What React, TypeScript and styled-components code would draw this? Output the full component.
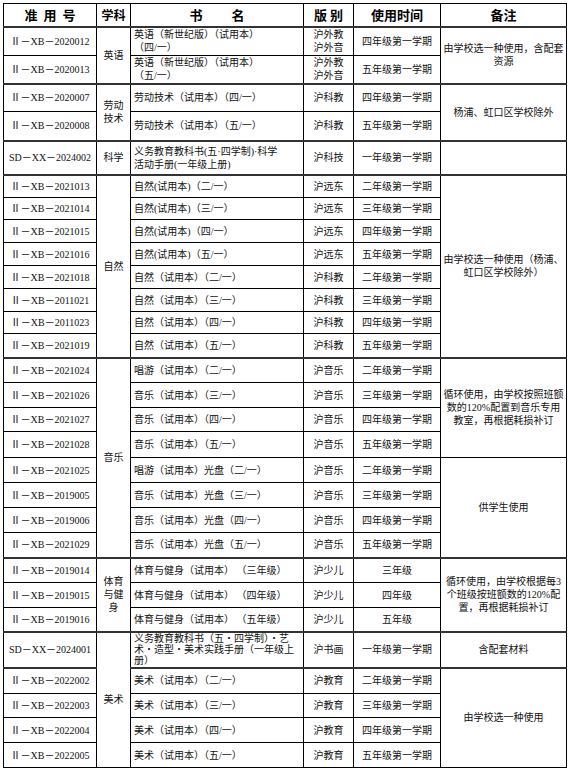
import React from 'react';
import styled, { createGlobalStyle } from 'styled-components';

const GlobalStyle = createGlobalStyle`
  html, body { margin: 0; padding: 0; background: #ffffff; }
  body { font-family: "Liberation Serif", "Noto Sans CJK SC", serif; color: #000; }
`;

const Page = styled.div`
  padding: 3px;
  width: 563px;
`;

const Table = styled.table`
  width: 563px;
  border-collapse: collapse;
  table-layout: fixed;
  font-family: "Liberation Serif", "Noto Sans CJK SC", serif;
  font-size: 10px;
  line-height: 13px;
  color: #111;
`;

const HeadRow = styled.tr`
  height: 23px;
`;

const HeadCell = styled.th<{ $small?: boolean }>`
  border: 1px solid #000;
  border-bottom: 2px solid #333;
  padding: 0;
  font-family: "Noto Sans CJK SC", sans-serif;
  font-weight: 700;
  font-size: ${p => (p.$small ? 12 : 13)}px;
  line-height: 16px;
  text-align: center;
  vertical-align: middle;
  white-space: pre;
  color: #000;
`;

const Row = styled.tr<{ $h: number; $group?: boolean }>`
  height: ${p => p.$h}px;
  & > td {
    border-top: ${p => (p.$group ? '2px solid #333' : '1px solid #000')};
  }
`;

const Cell = styled.td<{ $left?: boolean; $tight?: boolean }>`
  border: 1px solid #000;
  padding: ${p => (p.$left ? '0 1px 0 3px' : '0 1px')};
  text-align: ${p => (p.$left ? 'left' : 'center')};
  vertical-align: middle;
  white-space: pre;
  overflow: hidden;
  line-height: ${p => (p.$tight ? '11px' : '13px')};
`;

const Line = styled.span`
  display: block;
`;

type Span = { lines: string[]; span: number };
type RowData = {
  code: string;
  subject?: Span;
  name: string[];
  pub: string[];
  time: string;
  note?: Span;
  h: number;
  group?: boolean;
  tight?: boolean;
};

const rows: RowData[] = [
  { code: 'Ⅱ－XB－2020012', subject: { lines: ['英语'], span: 2 }, name: ['英语（新世纪版）（试用本）', '（四/一）'], pub: ['沪外教', '沪外音'], time: '四年级第一学期', note: { lines: ['由学校选一种使用，含配套', '资源'], span: 2 }, h: 29 },
  { code: 'Ⅱ－XB－2020013', name: ['英语（新世纪版）（试用本）', '（五/一）'], pub: ['沪外教', '沪外音'], time: '五年级第一学期', h: 28 },
  { code: 'Ⅱ－XB－2020007', subject: { lines: ['劳动', '技术'], span: 2 }, name: ['劳动技术（试用本）（四/一）'], pub: ['沪科教'], time: '四年级第一学期', note: { lines: ['杨浦、虹口区学校除外'], span: 2 }, h: 28, group: true },
  { code: 'Ⅱ－XB－2020008', name: ['劳动技术（试用本）（五/一）'], pub: ['沪科教'], time: '五年级第一学期', h: 29 },
  { code: 'SD－XX－2024002', subject: { lines: ['科学'], span: 1 }, name: ['义务教育教科书(五·四学制)·科学', '活动手册(一年级上册)'], pub: ['沪科技'], time: '一年级第一学期', note: { lines: [''], span: 1 }, h: 34, group: true },
  { code: 'Ⅱ－XB－2021013', subject: { lines: ['自然'], span: 8 }, name: ['自然(试用本)（二/一）'], pub: ['沪远东'], time: '二年级第一学期', note: { lines: ['由学校选一种使用（杨浦、', '虹口区学校除外）'], span: 8 }, h: 23, group: true },
  { code: 'Ⅱ－XB－2021014', name: ['自然(试用本)（三/一）'], pub: ['沪远东'], time: '三年级第一学期', h: 22 },
  { code: 'Ⅱ－XB－2021015', name: ['自然(试用本)（四/一）'], pub: ['沪远东'], time: '四年级第一学期', h: 23 },
  { code: 'Ⅱ－XB－2021016', name: ['自然(试用本)（五/一）'], pub: ['沪远东'], time: '五年级第一学期', h: 23 },
  { code: 'Ⅱ－XB－2021018', name: ['自然（试用本）（二/一）'], pub: ['沪科教'], time: '二年级第一学期', h: 23 },
  { code: 'Ⅱ－XB－2011021', name: ['自然（试用本）（三/一）'], pub: ['沪科教'], time: '三年级第一学期', h: 23 },
  { code: 'Ⅱ－XB－2011023', name: ['自然（试用本）（四/一）'], pub: ['沪科教'], time: '四年级第一学期', h: 22 },
  { code: 'Ⅱ－XB－2021019', name: ['自然（试用本）（五/一）'], pub: ['沪科教'], time: '五年级第一学期', h: 24 },
  { code: 'Ⅱ－XB－2021024', subject: { lines: ['音乐'], span: 8 }, name: ['唱游（试用本）（二/一）'], pub: ['沪音乐'], time: '二年级第一学期', note: { lines: ['循环使用，由学校按照班额', '数的120%配置到音乐专用', '教室，再根据耗损补订'], span: 4 }, h: 25, group: true },
  { code: 'Ⅱ－XB－2021026', name: ['音乐（试用本）（三/一）'], pub: ['沪音乐'], time: '三年级第一学期', h: 25 },
  { code: 'Ⅱ－XB－2021027', name: ['音乐（试用本）（四/一）'], pub: ['沪音乐'], time: '四年级第一学期', h: 24 },
  { code: 'Ⅱ－XB－2021028', name: ['音乐（试用本）（五/一）'], pub: ['沪音乐'], time: '五年级第一学期', h: 26 },
  { code: 'Ⅱ－XB－2021025', name: ['唱游（试用本）光盘（二/一）'], pub: ['沪音乐'], time: '二年级第一学期', note: { lines: ['供学生使用'], span: 4 }, h: 25 },
  { code: 'Ⅱ－XB－2019005', name: ['音乐（试用本）光盘（三/一）'], pub: ['沪音乐'], time: '三年级第一学期', h: 25 },
  { code: 'Ⅱ－XB－2019006', name: ['音乐（试用本）光盘（四/一）'], pub: ['沪音乐'], time: '四年级第一学期', h: 25 },
  { code: 'Ⅱ－XB－2021029', name: ['音乐（试用本）光盘（五/一）'], pub: ['沪音乐'], time: '五年级第一学期', h: 25 },
  { code: 'Ⅱ－XB－2019014', subject: { lines: ['体育', '与健', '身'], span: 3 }, name: ['体育与健身（试用本） （三年级）'], pub: ['沪少儿'], time: '三年级', note: { lines: ['循环使用，由学校根据每3', '个班级按班额数的120%配', '置，再根据耗损补订'], span: 3 }, h: 25, group: true },
  { code: 'Ⅱ－XB－2019015', name: ['体育与健身（试用本） （四年级）'], pub: ['沪少儿'], time: '四年级', h: 25 },
  { code: 'Ⅱ－XB－2019016', name: ['体育与健身（试用本） （五年级）'], pub: ['沪少儿'], time: '五年级', h: 24 },
  { code: 'SD－XX－2024001', subject: { lines: ['美术'], span: 5 }, name: ['义务教育教科书（五・四学制）・艺', '术・造型・美术实践手册（一年级上', '册）'], pub: ['沪书画'], time: '一年级第一学期', note: { lines: ['含配套材料'], span: 1 }, h: 36, group: true, tight: true },
  { code: 'Ⅱ－XB－2022002', name: ['美术（试用本）（二/一）'], pub: ['沪教育'], time: '二年级第一学期', note: { lines: ['由学校选一种使用'], span: 4 }, h: 26, group: true },
  { code: 'Ⅱ－XB－2022003', name: ['美术（试用本）（三/一）'], pub: ['沪教育'], time: '三年级第一学期', h: 24 },
  { code: 'Ⅱ－XB－2022004', name: ['美术（试用本）（四/一）'], pub: ['沪教育'], time: '四年级第一学期', h: 25 },
  { code: 'Ⅱ－XB－2022005', name: ['美术（试用本）（五/一）'], pub: ['沪教育'], time: '五年级第一学期', h: 25 },
];

const Lines: React.FC<{ lines: string[] }> = ({ lines }) => (
  <>
    {lines.map((l, i) => (
      <Line key={i}>{l}</Line>
    ))}
  </>
);

export default function App() {
  return (
    <Page>
      <GlobalStyle />
      <Table>
        <colgroup>
          <col style={{ width: 93 }} />
          <col style={{ width: 34 }} />
          <col style={{ width: 173 }} />
          <col style={{ width: 50 }} />
          <col style={{ width: 87 }} />
          <col style={{ width: 126 }} />
        </colgroup>
        <thead>
          <HeadRow>
            <HeadCell>{'准  用  号'}</HeadCell>
            <HeadCell $small>学科</HeadCell>
            <HeadCell>{'书　　 名'}</HeadCell>
            <HeadCell>{'版 别'}</HeadCell>
            <HeadCell>使用时间</HeadCell>
            <HeadCell>备注</HeadCell>
          </HeadRow>
        </thead>
        <tbody>
          {rows.map((r, i) => (
            <Row key={i} $h={r.h} $group={r.group}>
              <Cell>{r.code}</Cell>
              {r.subject && (
                <Cell rowSpan={r.subject.span}>
                  <Lines lines={r.subject.lines} />
                </Cell>
              )}
              <Cell $left $tight={r.tight}>
                <Lines lines={r.name} />
              </Cell>
              <Cell>
                <Lines lines={r.pub} />
              </Cell>
              <Cell>{r.time}</Cell>
              {r.note && (
                <Cell rowSpan={r.note.span}>
                  <Lines lines={r.note.lines} />
                </Cell>
              )}
            </Row>
          ))}
        </tbody>
      </Table>
    </Page>
  );
}
